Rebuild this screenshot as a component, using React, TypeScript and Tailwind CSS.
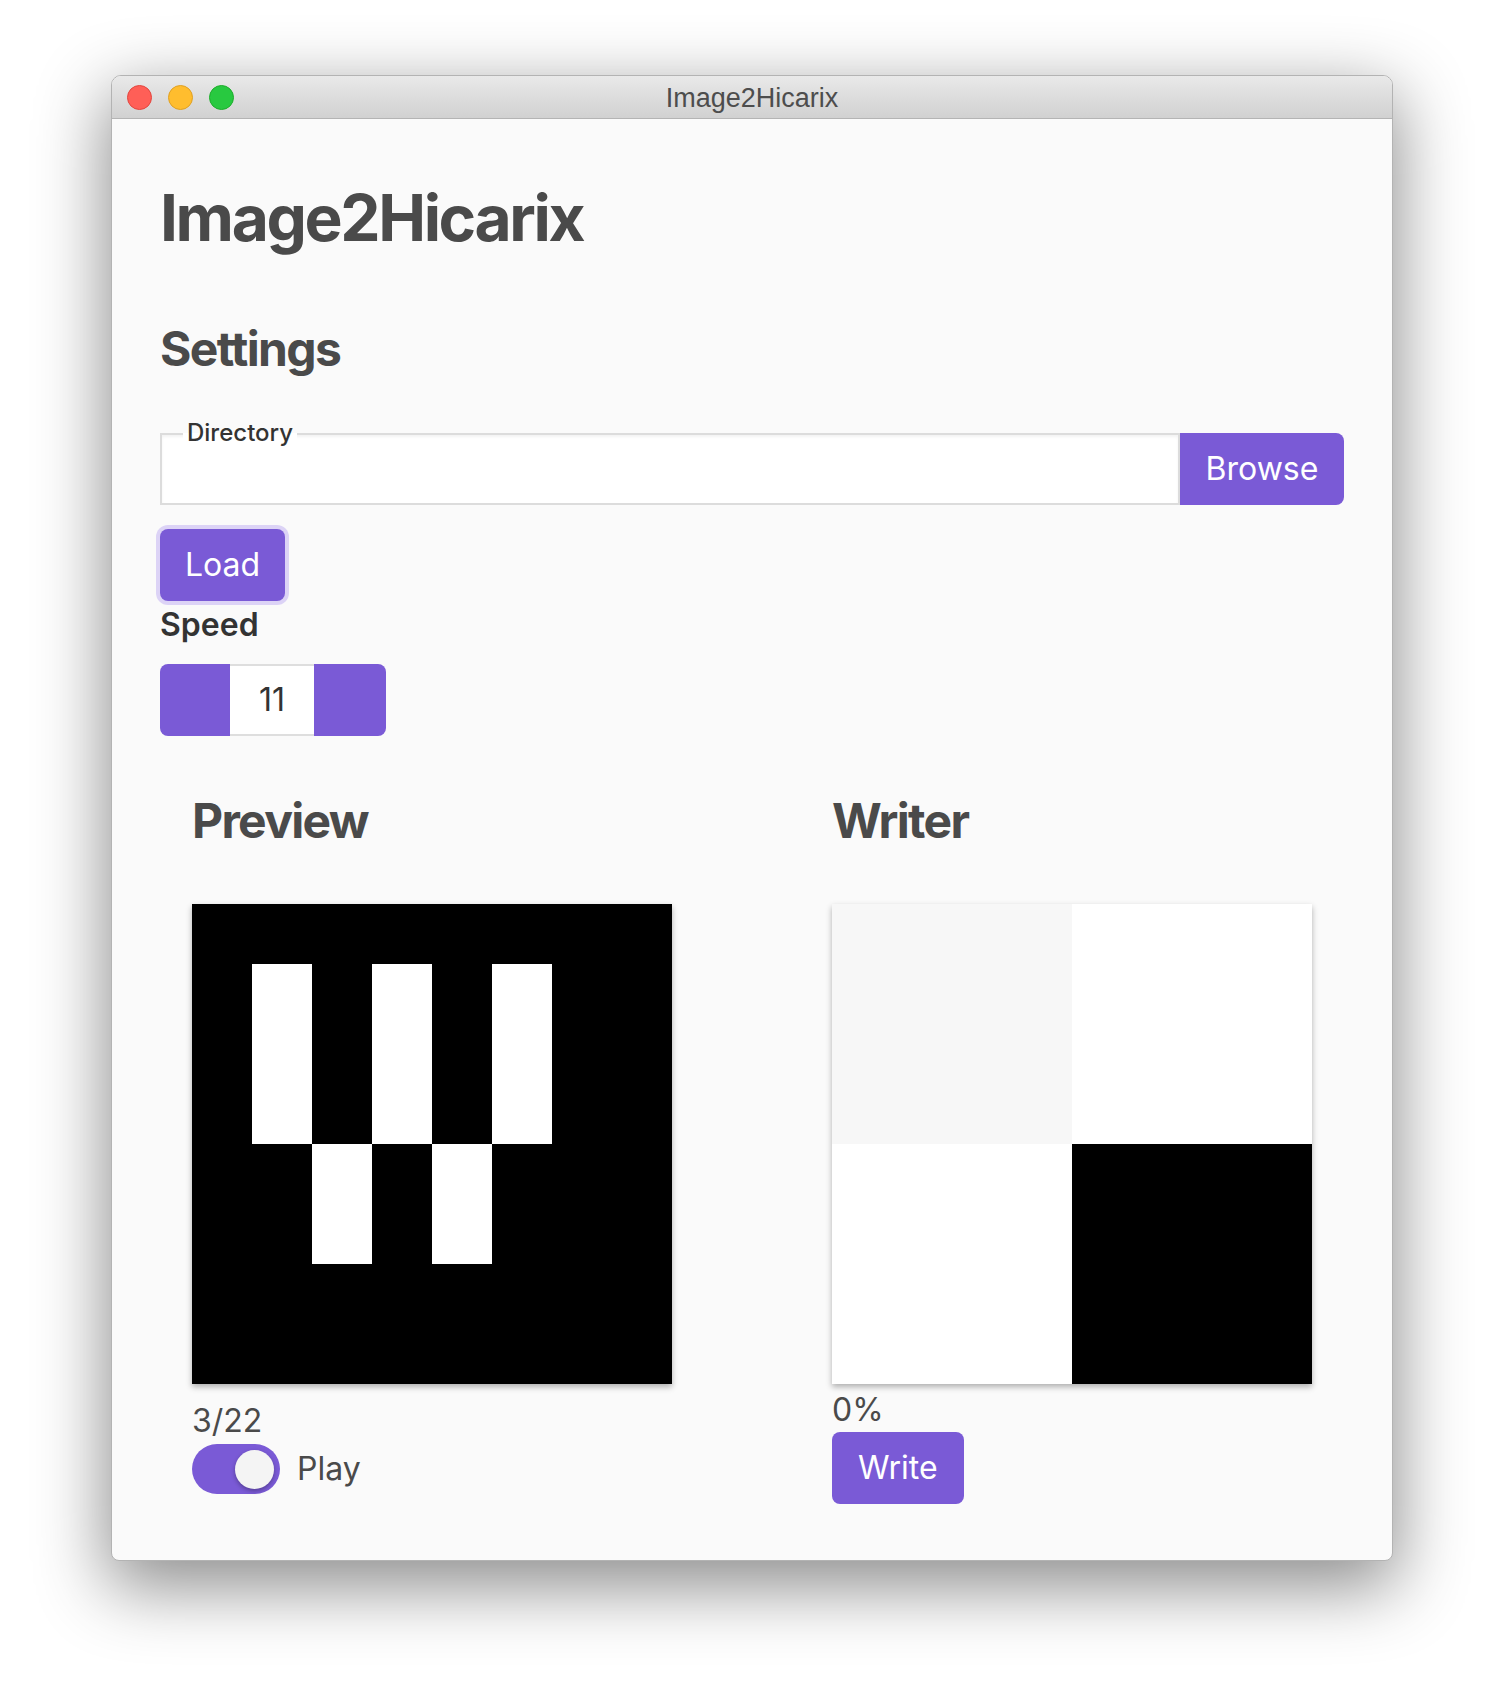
const PREVIEW = [
  '00000000',
  '01010100',
  '01010100',
  '01010100',
  '00101000',
  '00101000',
  '00000000',
  '00000000',
];

const WRITER = ['bg-[#f7f7f7]', 'bg-white', 'bg-white', 'bg-black'];

function TitleBar() {
  return (
    <div className="grid h-[43px] grid-cols-[1fr_auto_1fr] items-center border-b border-[#b4b4b4] bg-linear-to-b from-[#e9e9e9] to-[#d1d1d1]">
      <div className="flex items-center gap-[16px] pl-[15px] pt-[1px]">
        <span className="size-[25px] rounded-full border border-[#e2463f] bg-[#ff5f57]" />
        <span className="size-[25px] rounded-full border border-[#dfa023] bg-[#ffbd2e]" />
        <span className="size-[25px] rounded-full border border-[#1dad2b] bg-[#28c940]" />
      </div>
      <div className="pt-[3px] font-['Liberation_Sans',sans-serif] text-[27px] leading-none text-[#4d4d4d]">
        Image2Hicarix
      </div>
      <div />
    </div>
  );
}

export default function App() {
  return (
    <div className="min-h-screen bg-white pt-[75px] pb-[148px] font-['Inter',sans-serif]">
      <div className="mx-auto w-[1282px] overflow-hidden rounded-t-[10px] rounded-b-[8px] border border-[#b3b3b3] bg-[#fafafa] shadow-[0_22px_70px_4px_rgba(0,0,0,0.45)]">
        <TitleBar />

        <div className="flex flex-col items-start px-12 pt-[67px] pb-[56px] text-[#4a4a4a]">
          <h1 className="text-[64px] leading-none font-bold tracking-[-0.037em]">Image2Hicarix</h1>

          <h2 className="mt-[75px] text-[48px] leading-none font-bold tracking-[-0.035em]">Settings</h2>

          <div className="mt-[60px] flex h-[72px] w-full">
            <div className="relative flex-1 border-2 border-[#dcdcdc] bg-white shadow-[inset_0_2px_3px_rgba(0,0,0,0.05)]">
              <span className="absolute -top-[14px] left-[21px] bg-linear-to-b from-[#fafafa] from-50% to-white to-50% px-[4px] text-[24px] leading-none font-medium text-[#333]">
                Directory
              </span>
            </div>
            <button className="w-[164px] rounded-r-lg bg-[#7a5ad6] text-[32px] leading-none text-white">
              Browse
            </button>
          </div>

          <button className="mt-6 h-[72px] rounded-lg bg-[#7a5ad6] px-[25px] text-[32px] leading-none text-white ring-4 ring-[#dcd3f6]">
            Load
          </button>

          <div className="mt-2 text-[32px] leading-none font-semibold text-[#333]">Speed</div>

          <div className="mt-[23px] flex h-[72px]">
            <button className="w-[70px] rounded-l-lg bg-[#7a5ad6]" />
            <div className="flex w-[84px] items-center justify-center border-y-2 border-[#dedede] bg-white text-[32px] leading-none text-[#333]">
              11
            </div>
            <button className="w-[72px] rounded-r-lg bg-[#7a5ad6]" />
          </div>

          <div className="mt-[61px] flex w-full justify-between px-8">
            <div className="w-[480px]">
              <h2 className="text-[48px] leading-none font-bold tracking-[-0.035em]">Preview</h2>
              <div className="mt-[59px] grid grid-cols-8 shadow-[0_3px_6px_rgba(0,0,0,0.3)]">
                {PREVIEW.flatMap((row, r) =>
                  row.split('').map((c, i) => (
                    <div key={`${r}-${i}`} className={c === '1' ? 'h-[60px] bg-white' : 'h-[60px] bg-black'} />
                  ))
                )}
              </div>
              <div className="mt-[21px] text-[32px] leading-none">3/22</div>
              <div className="mt-[7px] flex items-center gap-[17px]">
                <div className="flex h-[50px] w-[88px] items-center justify-end rounded-full bg-[#7a5ad6] pr-[6px]">
                  <div className="size-[39px] rounded-full bg-[#f4f4f4] shadow-[0_2px_4px_rgba(0,0,0,0.3)]" />
                </div>
                <span className="text-[32px] leading-none">Play</span>
              </div>
            </div>

            <div className="w-[480px]">
              <h2 className="text-[48px] leading-none font-bold tracking-[-0.035em]">Writer</h2>
              <div className="mt-[59px] grid grid-cols-2 shadow-[0_3px_6px_rgba(0,0,0,0.3)]">
                {WRITER.map((bg, i) => (
                  <div key={i} className={`h-[240px] ${bg}`} />
                ))}
              </div>
              <div className="mt-[10px] text-[32px] leading-none">0%</div>
              <button className="mt-[6px] h-[72px] rounded-lg bg-[#7a5ad6] px-[26px] text-[32px] leading-none text-white">
                Write
              </button>
            </div>
          </div>
        </div>
      </div>
    </div>
  );
}
